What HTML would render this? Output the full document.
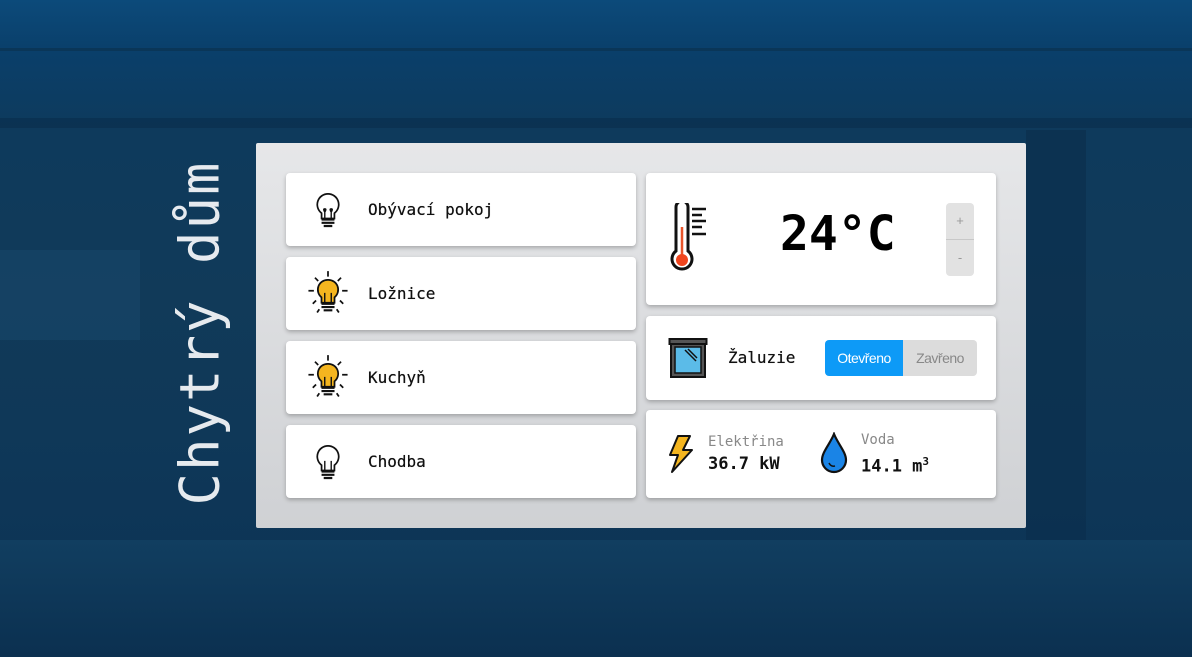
<!DOCTYPE html>
<html><head><meta charset="utf-8"><style>
body{margin:0;width:1192px;height:657px;overflow:hidden;position:relative;font-family:"Liberation Mono","DejaVu Sans Mono",monospace;
background:linear-gradient(180deg,#0c4a7a 0%,#0a3f6a 8%,#0e3a5c 20%,#113a59 45%,#0f3858 65%,#0b3255 100%);}
.bg{position:absolute}
.panel{position:absolute;left:256px;top:143px;width:770px;height:385px;background:linear-gradient(180deg,#e6e7e9,#cfd1d4);border-radius:2px}
.card{position:absolute;background:#fff;border-radius:4px;box-shadow:0 2px 4px rgba(0,0,0,.25)}
.lbl{position:absolute;left:82px;font-size:16px;color:#111;font-family:"DejaVu Sans Mono",monospace;text-shadow:0 0 .4px #111}
.title{position:absolute;left:200px;top:333px;transform:translate(-50%,-50%) rotate(-90deg);color:#f2f4f7;font-size:54px;font-family:"DejaVu Sans Mono",monospace;font-weight:200;white-space:nowrap;letter-spacing:2px;opacity:.95}
</style></head><body>
<div class="bg" style="left:0;top:48px;width:1192px;height:3px;background:#0a3658"></div>
<div class="bg" style="left:0;top:118px;width:1192px;height:10px;background:#0a2f4f;opacity:.7"></div>
<div class="bg" style="left:1026px;top:130px;width:60px;height:420px;background:#0c2f4d;opacity:.7"></div>
<div class="bg" style="left:0;top:540px;width:1192px;height:117px;background:linear-gradient(180deg,#113e60,#0b3050)"></div>
<div class="bg" style="left:0;top:250px;width:140px;height:90px;background:#1c5075;opacity:.35"></div>
<div class="title">Chytrý dům</div>
<div class="panel"></div>

<div class="card" style="left:286px;top:173px;width:350px;height:73px">
<svg style="position:absolute;left:27px;top:18px" width="30" height="40" viewBox="0 0 28 36"><path d="M14 2a10 10 0 0 0-6 18v5h12v-5a10 10 0 0 0-6-18z" fill="#fff" stroke="#111" stroke-width="1.6"/><path d="M11 25v-9m6 9v-9m-6 3q-2-3 0-3q2 0 0 3m6 0q-2-3 0-3q2 0 0 3" stroke="#111" fill="none" stroke-width="1.3"/><path d="M8 26h12M8 29h12M10 32h8" stroke="#111" stroke-width="2"/></svg>
<div class="lbl" style="top:27px">Obývací pokoj</div></div>

<div class="card" style="left:286px;top:257px;width:350px;height:73px">
<svg style="position:absolute;left:18px;top:12px" width="48" height="50" viewBox="0 0 44 46"><path d="M22 2v5M10 8l3 3M34 8l-3 3M4 20h5M35 20h5M8 32l3-3M36 32l-3-3M12 40l2-3M32 40l-2-3" stroke="#111" stroke-width="1.6"/><path d="M22 10a9 9 0 0 0-6 16v5h12v-5a9 9 0 0 0-6-16z" fill="#f4b51f" stroke="#111" stroke-width="1.6"/><path d="M19 31v-9m6 9v-9" stroke="#111" stroke-width="1.3"/><path d="M16 32h12M16 35h12M18 38h8" stroke="#111" stroke-width="2"/></svg>
<div class="lbl" style="top:27px">Ložnice</div></div>

<div class="card" style="left:286px;top:341px;width:350px;height:73px">
<svg style="position:absolute;left:18px;top:12px" width="48" height="50" viewBox="0 0 44 46"><path d="M22 2v5M10 8l3 3M34 8l-3 3M4 20h5M35 20h5M8 32l3-3M36 32l-3-3M12 40l2-3M32 40l-2-3" stroke="#111" stroke-width="1.6"/><path d="M22 10a9 9 0 0 0-6 16v5h12v-5a9 9 0 0 0-6-16z" fill="#f4b51f" stroke="#111" stroke-width="1.6"/><path d="M19 31v-9m6 9v-9" stroke="#111" stroke-width="1.3"/><path d="M16 32h12M16 35h12M18 38h8" stroke="#111" stroke-width="2"/></svg>
<div class="lbl" style="top:27px">Kuchyň</div></div>

<div class="card" style="left:286px;top:425px;width:350px;height:73px">
<svg style="position:absolute;left:27px;top:18px" width="30" height="40" viewBox="0 0 28 36"><path d="M14 2a10 10 0 0 0-6 18v5h12v-5a10 10 0 0 0-6-18z" fill="#fff" stroke="#111" stroke-width="1.6"/><path d="M11 25v-9m6 9v-9" stroke="#111" fill="none" stroke-width="1.3"/><path d="M8 26h12M8 29h12M10 32h8" stroke="#111" stroke-width="2"/></svg>
<div class="lbl" style="top:27px">Chodba</div></div>

<div class="card" style="left:646px;top:173px;width:350px;height:132px">
<svg style="position:absolute;left:20px;top:30px" width="45" height="72" viewBox="0 0 45 72"><path d="M10 4a6 6 0 0 1 12 0v44a10 10 0 1 1-12 0z" fill="#fff" stroke="#111" stroke-width="3"/><path d="M16 24v30" stroke="#e8542a" stroke-width="2.5"/><circle cx="16" cy="57" r="6" fill="#f0451e"/><path d="M26 6h14M26 12h10M26 18h14M26 24h10M26 31h14" stroke="#111" stroke-width="2.5"/></svg>
<div style="position:absolute;left:134px;top:33px;font-size:48px;font-weight:bold;font-family:'DejaVu Sans Mono',monospace;color:#000">24°C</div>
<div style="position:absolute;left:300px;top:30px;width:28px;height:73px;background:#e2e2e2;border-radius:4px;color:#999;font-size:13px;text-align:center;font-family:'Liberation Sans',sans-serif">
<div style="height:36px;line-height:36px;border-bottom:1px solid #c8c8c8">+</div><div style="line-height:36px">-</div></div></div>

<div class="card" style="left:646px;top:316px;width:350px;height:84px">
<svg style="position:absolute;left:22px;top:21px" width="40" height="42" viewBox="0 0 40 42"><rect x="1.5" y="2" width="37" height="5" fill="#555" stroke="#111" stroke-width="2"/><rect x="3" y="7" width="34" height="33" fill="#555" stroke="#111" stroke-width="2"/><rect x="7" y="10" width="26" height="26" fill="#5bbbe8" stroke="#111" stroke-width="1.5"/><path d="M17 13l11 11M20 12l9 9" stroke="#111" stroke-width="1.5"/></svg>
<div style="position:absolute;left:82px;top:32px;font-size:16px;font-family:'DejaVu Sans Mono',monospace;color:#111;text-shadow:0 0 .4px #111">Žaluzie</div>
<div style="position:absolute;left:179px;top:24px;width:78px;height:36px;background:#0d9af7;border-radius:4px 0 0 4px;color:#fff;font:14px 'Liberation Sans',sans-serif;line-height:36px;text-align:center;letter-spacing:-.5px">Otevřeno</div>
<div style="position:absolute;left:257px;top:24px;width:74px;height:36px;background:#dcdcdc;border-radius:0 4px 4px 0;color:#888;font:14px 'Liberation Sans',sans-serif;line-height:36px;text-align:center;letter-spacing:-.5px">Zavřeno</div></div>

<div class="card" style="left:646px;top:410px;width:350px;height:88px">
<svg style="position:absolute;left:20px;top:24px" width="28" height="40" viewBox="0 0 28 40"><path d="M12 2h12l-7 14h9L6 38l6-17H4z" fill="#f4b51f" stroke="#111" stroke-width="2" stroke-linejoin="round"/></svg>
<div style="position:absolute;left:62px;top:24px;font-size:14px;color:#888;font-family:'DejaVu Sans Mono',monospace">Elektřina</div>
<div style="position:absolute;left:62px;top:44px;font-size:17px;font-weight:bold;color:#111;font-family:'DejaVu Sans Mono',monospace">36.7 kW</div>
<svg style="position:absolute;left:174px;top:22px" width="28" height="42" viewBox="0 0 28 42"><path d="M14 2C10 12 2 20 2 28a12 12 0 0 0 24 0C26 20 18 12 14 2z" fill="#1a84e6" stroke="#111" stroke-width="2.2"/><path d="M9 31q2 4 6 3" stroke="#111" stroke-width="1.5" fill="none"/></svg>
<div style="position:absolute;left:215px;top:22px;font-size:14px;color:#888;font-family:'DejaVu Sans Mono',monospace">Voda</div>
<div style="position:absolute;left:215px;top:45px;font-size:17px;font-weight:bold;color:#111;font-family:'DejaVu Sans Mono',monospace">14.1 m<sup style="font-size:11px">3</sup></div></div>
</body></html>
